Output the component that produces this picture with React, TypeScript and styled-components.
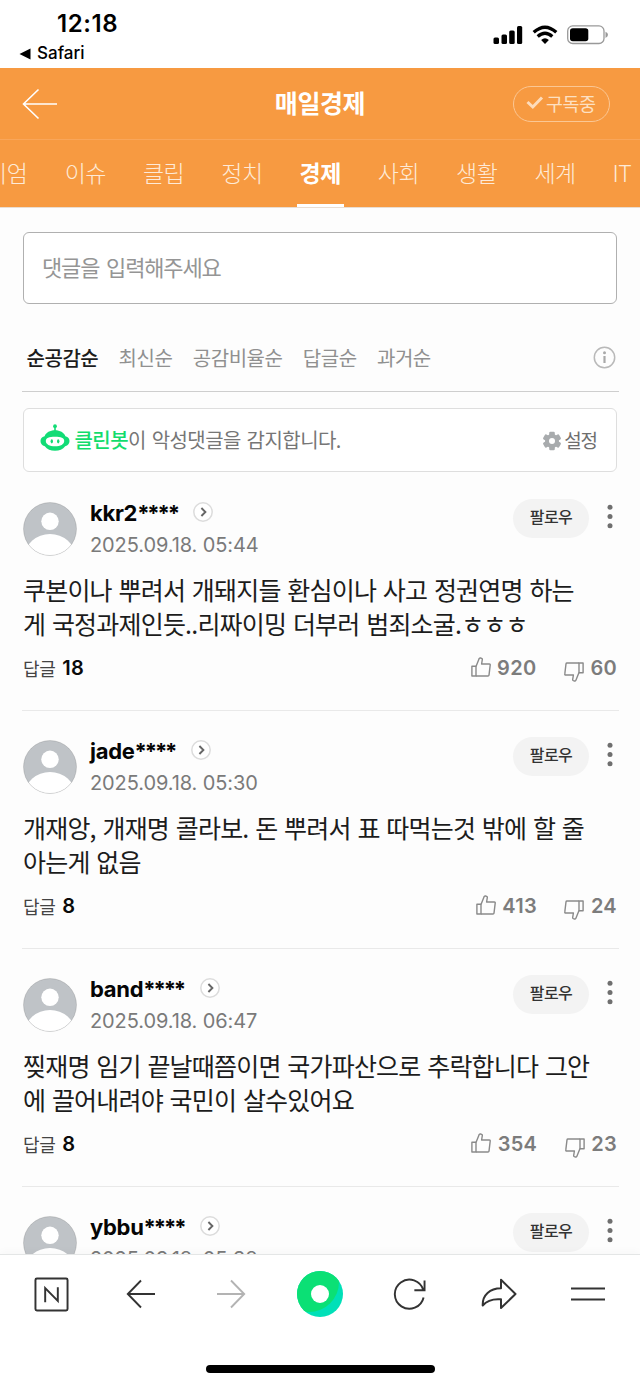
import React from "react";
import styled, { createGlobalStyle } from "styled-components";

const KR = `"Noto Sans CJK KR", "Noto Sans", sans-serif`;
const LATIN = `Inter, "Noto Sans CJK KR", sans-serif`;

const GlobalStyle = createGlobalStyle`
  *, *::before, *::after { box-sizing: border-box; }
  html, body { margin: 0; padding: 0; }
  body { background: #fff; font-family: ${KR}; }
  svg { display: block; flex: none; }
`;

const Screen = styled.div`
  width: 640px;
  height: 1385px;
  display: flex;
  flex-direction: column;
  overflow: hidden;
  background: #fff;
`;

const StatusBar = styled.div`
  height: 68px;
  flex: none;
  display: flex;
  justify-content: space-between;
  padding: 0 31px 0 19px;
  font-family: ${LATIN};
  color: #000;
`;

const StatusLeft = styled.div`
  display: flex;
  flex-direction: column;
`;

const Clock = styled.div`
  margin: 10px 0 0 38px;
  font-size: 24px;
  line-height: 28px;
  font-weight: 600;
  letter-spacing: 0.6px;
`;

const BackToApp = styled.div`
  display: flex;
  align-items: center;
  gap: 6px;
  margin-top: 5px;
  font-size: 17px;
  line-height: 21px;
  font-weight: 500;
`;

const StatusRight = styled.div`
  display: flex;
  align-items: flex-start;
  gap: 9px;
  padding-top: 24.5px;
`;

const Header = styled.header`
  height: 72px;
  flex: none;
  display: grid;
  grid-template-columns: 1fr auto 1fr;
  align-items: center;
  padding: 0 30px 0 22px;
  background: #f79a41;
  border-bottom: 1px solid #f9a65a;
`;

const Title = styled.h1`
  margin: 0 -8px 4px 0;
  font-size: 25px;
  line-height: 36px;
  font-weight: 700;
  letter-spacing: -0.4px;
  color: #fff;
`;

const SubscribeButton = styled.button`
  justify-self: end;
  width: 97px;
  height: 36px;
  display: flex;
  align-items: center;
  gap: 2px;
  padding: 0 0 2px 12px;
  border: 1.5px solid #fbc794;
  border-radius: 18px;
  background: none;
  font-family: ${KR};
  font-size: 18.5px;
  letter-spacing: -0.5px;
  color: #fde0c2;
  white-space: nowrap;
`;

const CategoryTabs = styled.nav`
  height: 68px;
  flex: none;
  display: flex;
  gap: 31.3px;
  margin-left: -58.5px;
  width: 698.5px;
  overflow: hidden;
  background: #f79a41;
  border-bottom: 1px solid #e9ddd2;
`;

const CategoryTab = styled.a<{ $active?: boolean; $width: number }>`
  flex: none;
  width: ${(p) => p.$width}px;
  display: flex;
  justify-content: center;
  font-size: 23px;
  line-height: 65px;
  letter-spacing: -0.5px;
  white-space: nowrap;
  font-weight: ${(p) => (p.$active ? 700 : 300)};
  color: ${(p) => (p.$active ? "#fff" : "#feead7")};
  box-shadow: ${(p) => (p.$active ? "inset 0 -3px 0 #fff" : "none")};
`;

const Content = styled.main`
  flex: 1;
  min-height: 0;
  overflow: hidden;
  display: flex;
  flex-direction: column;
  padding: 24px 23px 0;
  background: #fdfdfd;
`;

const CommentInput = styled.div`
  height: 72px;
  flex: none;
  padding-left: 18px;
  border: 1.5px solid #b0b0b0;
  border-radius: 6px;
  background: #fff;
  font-size: 22px;
  line-height: 67px;
  letter-spacing: -1.15px;
  word-spacing: 3px;
  color: #959595;
`;

const SortBar = styled.div`
  flex: none;
  height: 88px;
  display: flex;
  align-items: center;
  gap: 20.3px;
  margin: 0 -2px 0 -1px;
  padding: 20px 3px 0 4.5px;
  border-bottom: 1.5px solid #cecece;
`;

const SortOption = styled.span<{ $active?: boolean }>`
  font-size: 20px;
  line-height: 30px;
  letter-spacing: -0.45px;
  font-weight: ${(p) => (p.$active ? 500 : 400)};
  color: ${(p) => (p.$active ? "#1c1c1c" : "#909090")};
`;

const Spacer = styled.span`
  flex: 1;
`;

const CleanBotBox = styled.div`
  flex: none;
  height: 64px;
  margin-top: 16px;
  padding: 0 19px 0 16px;
  display: flex;
  align-items: center;
  border: 1.5px solid #dedede;
  border-radius: 6px;
  background: #fff;
`;

const BotSlot = styled.div`
  padding-bottom: 5px;
`;

const CleanBotText = styled.p`
  margin: 0 0 1px 4.5px;
  font-size: 20px;
  line-height: 30px;
  letter-spacing: -0.55px;
  word-spacing: 1.8px;
  color: #767676;
`;

const BotName = styled.strong`
  font-weight: 500;
  color: #12dc6c;
`;

const Settings = styled.span`
  margin: 0 0 1px 2.5px;
  font-size: 19px;
  line-height: 30px;
  letter-spacing: -1.1px;
  color: #6e6e6e;
`;

const GearSlot = styled.div`
  padding-top: 2px;
`;

const CommentList = styled.section`
  margin-top: 1px;
`;

const Comment = styled.article`
  height: 238px;
  margin: 0 -2px 0 -1px;
  padding: 26px 2px 0 1px;
  border-bottom: 1.5px solid #e9e9e9;
`;

const CommentHead = styled.div`
  display: flex;
  align-items: flex-start;
  height: 72.5px;
`;

const AvatarSlot = styled.div`
  padding-top: 3px;
`;

const Author = styled.div`
  margin-left: 13px;
  flex: 1;
`;

const NameRow = styled.div`
  display: flex;
  align-items: center;
  height: 27px;
`;

const Name = styled.span`
  padding-top: 2px;
  font-family: ${LATIN};
  font-size: 22px;
  line-height: 27px;
  font-weight: 700;
  letter-spacing: -0.3px;
  color: #050505;
`;

const Mask = styled.span`
  margin-right: 15.5px;
  letter-spacing: -2.1px;
`;

const ArrowSlot = styled.span`
  padding-bottom: 2px;
`;

const DateText = styled.time`
  display: block;
  margin-top: 6px;
  font-family: ${LATIN};
  font-size: 20px;
  line-height: 26px;
  letter-spacing: -0.1px;
  color: #7a7a7a;
`;

const FollowButton = styled.button`
  width: 76px;
  height: 38.5px;
  padding: 0 0 4px;
  border: 0;
  border-radius: 20px;
  background: #f3f3f3;
  font-family: ${KR};
  font-size: 16px;
  font-weight: 500;
  letter-spacing: -0.6px;
  color: #333;
`;

const MenuSlot = styled.div`
  width: 28px;
  padding: 5px 0 0 18px;
`;

const Body = styled.p`
  margin: 0;
  font-size: 25px;
  line-height: 34px;
  letter-spacing: -0.8px;
  word-spacing: 1.9px;
  white-space: pre;
  color: #1c1c1c;
`;

const CommentFoot = styled.div`
  display: flex;
  align-items: center;
  margin-top: 13.5px;
  height: 30px;
`;

const ReplyLabel = styled.span`
  margin: 0 6.5px 1px 0;
  font-size: 18px;
  letter-spacing: -0.2px;
  color: #444;
`;

const ReplyCount = styled.span`
  font-family: ${LATIN};
  font-size: 20px;
  font-weight: 600;
  letter-spacing: 0.4px;
  color: #0a0a0a;
`;

const Vote = styled.span`
  display: flex;
  align-items: center;
  gap: 6.5px;
  margin-left: 27.5px;
  font-family: ${LATIN};
  font-size: 20px;
  font-weight: 600;
  letter-spacing: 0.3px;
  color: #7c7c7c;
`;

const ThumbSlot = styled.span<{ $down?: boolean }>`
  padding-top: ${(p) => (p.$down ? 8 : 0)}px;
  padding-bottom: ${(p) => (p.$down ? 0 : 2)}px;
`;

const BottomBar = styled.footer`
  height: 131px;
  flex: none;
  display: flex;
  flex-direction: column;
  justify-content: space-between;
  align-items: center;
  padding-bottom: 12px;
  background: #fff;
  border-top: 1.5px solid #e4e6e6;
  box-shadow: 0 -3px 8px rgba(0, 0, 0, 0.025);
`;

const NavRow = styled.div`
  align-self: stretch;
  height: 78px;
  padding: 0 7px;
  display: grid;
  grid-template-columns: repeat(7, 1fr);
  place-items: center;
`;

const HomeIndicator = styled.div`
  width: 229px;
  height: 8px;
  border-radius: 4px;
  background: #000;
`;

const SignalIcon = () => (
  <svg width="30" height="20" viewBox="0 0 30 20">
    <rect x="0.5" y="12.5" width="5.5" height="6.5" rx="1.5" />
    <rect x="8.5" y="9.5" width="5.5" height="9.5" rx="1.5" />
    <rect x="16.2" y="5.5" width="5.5" height="13.5" rx="1.5" />
    <rect x="24" y="1" width="5.2" height="18" rx="1.5" />
  </svg>
);

const WifiIcon = () => (
  <svg width="26" height="20" viewBox="0 0 26 20" fill="none" stroke="#000" strokeWidth="3.3">
    <path d="M1.7 7.3Q13-3 24.3 7.3" />
    <path d="M5.7 11.5Q13 5 20.3 11.5" />
    <path d="M9.1 15Q13 11.6 16.9 15L13 19Z" fill="#000" stroke="none" />
  </svg>
);

const BatteryIcon = () => (
  <svg width="42" height="20" viewBox="0 0 42 20">
    <rect x="0.7" y="0.9" width="36.3" height="17.6" rx="5" fill="none" stroke="#999" strokeWidth="1.3" />
    <rect x="3" y="3.3" width="18.3" height="13" rx="2.8" />
    <path d="M38.5 6.7Q41 7.7 41 9.7T38.5 12.9Z" fill="#999" />
  </svg>
);

const InfoIcon = () => (
  <svg width="23" height="23" viewBox="0 0 23 23">
    <circle cx="11.5" cy="11.5" r="10.2" fill="none" stroke="#b9b9b9" strokeWidth="1.5" />
    <path d="M11.5 10V17" stroke="#a9a9a9" strokeWidth="2.2" />
    <circle cx="11.5" cy="6.8" r="1.5" fill="#a9a9a9" />
  </svg>
);

const BotIcon = () => (
  <svg width="30" height="28" viewBox="0 0 30 28">
    <g fill="#12dc76">
      <circle cx="15" cy="2.2" r="1.9" />
      <rect x="14.2" y="3" width="1.6" height="5" />
      <path d="M15 6.3C20 6.3 24 8.6 25.4 12.2C28.3 12.8 29.5 14.8 29.5 17C29.5 19.6 28 21.5 25.2 22.2C23 25.2 19.3 26.8 15 26.8S7 25.2 4.8 22.2C2 21.5 0.5 19.6 0.5 17C0.5 14.8 1.7 12.8 4.6 12.2C6 8.6 10 6.3 15 6.3Z" />
    </g>
    <path d="M15 12.7C21 12.7 24.2 13.7 24.2 17C24.2 20.3 20.5 22.3 15 22.3S5.8 20.3 5.8 17C5.8 13.7 9 12.7 15 12.7Z" fill="#fff" />
    <ellipse cx="11.8" cy="17.3" rx="1.2" ry="2.1" fill="#12dc76" />
    <ellipse cx="18.2" cy="17.3" rx="1.2" ry="2.1" fill="#12dc76" />
  </svg>
);

const GearIcon = () => (
  <svg width="20" height="20" viewBox="0 0 20 20">
    <g fill="#a8abad">
      {[0, 60, 120].map((deg) => (
        <rect key={deg} x="7.2" y="0.8" width="5.6" height="18.4" rx="1.2" transform={`rotate(${deg} 10 10)`} />
      ))}
      <circle cx="10" cy="10" r="7" />
    </g>
    <circle cx="10" cy="10" r="3" fill="#fff" />
  </svg>
);

const Avatar = ({ id }: { id: string }) => (
  <svg width="54" height="54" viewBox="0 0 54 54">
    <clipPath id={id}>
      <circle cx="27" cy="27" r="26.5" />
    </clipPath>
    <g clipPath={`url(#${id})`}>
      <rect width="54" height="54" fill="#bfc3c7" />
      <circle cx="27" cy="19.3" r="8.7" fill="#fff" />
      <ellipse cx="27" cy="54" rx="25" ry="22" fill="#fff" />
    </g>
    <circle cx="27" cy="27" r="26.5" fill="none" stroke="#000" strokeOpacity="0.12" />
  </svg>
);

const ProfileArrow = () => (
  <svg width="20" height="20" viewBox="0 0 20 20" fill="none">
    <circle cx="10" cy="10" r="9.2" fill="#fff" stroke="#dcdcdc" strokeWidth="1.5" />
    <path d="M8.4 6L12.4 10L8.4 14" stroke="#666" strokeWidth="1.9" />
  </svg>
);

const MoreIcon = () => (
  <svg width="6" height="26" viewBox="0 0 6 26" fill="#6f6f6f">
    <circle cx="3" cy="3.2" r="2.5" />
    <circle cx="3" cy="12.4" r="2.5" />
    <circle cx="3" cy="21.7" r="2.5" />
  </svg>
);

const ThumbIcon = ({ down }: { down?: boolean }) => (
  <svg width="20" height="20" viewBox="0 0 20 20" fill="none" stroke="#8a8a8a" strokeWidth="1.4" strokeLinejoin="round">
    <g transform={down ? "rotate(180 10 10)" : undefined}>
      <path d="M0.9 9.3H5V19H0.9Z" />
      <path d="M5 9.5L8.1 1.8C8.3 1 8.9 0.8 9.6 1L10.6 1.3C11.2 1.5 11.4 2 11.3 2.6L10.6 7H18.3C19 7 19.3 7.4 19.2 8.1L18 18.1C17.9 18.7 17.5 19 17 19H5" />
    </g>
  </svg>
);

interface CommentData {
  name: string;
  date: string;
  body?: string;
  replies?: number;
  up?: number;
  down?: number;
}

const comments: CommentData[] = [
  { name: "kkr2", date: "2025.09.18. 05:44", body: "쿠본이나 뿌려서 개돼지들 환심이나 사고 정권연명 하는\n게 국정과제인듯..리짜이밍 더부러 범죄소굴.ㅎㅎㅎ", replies: 18, up: 920, down: 60 },
  { name: "jade", date: "2025.09.18. 05:30", body: "개재앙, 개재명 콜라보. 돈 뿌려서 표 따먹는것 밖에 할 줄\n아는게 없음", replies: 8, up: 413, down: 24 },
  { name: "band", date: "2025.09.18. 06:47", body: "찢재명 임기 끝날때쯤이면 국가파산으로 추락합니다 그안\n에 끌어내려야 국민이 살수있어요", replies: 8, up: 354, down: 23 },
  { name: "ybbu", date: "2025.09.18. 05:38" },
];

const categories = [
  { label: "프리미엄", width: 89 },
  { label: "이슈", width: 47 },
  { label: "클립", width: 47 },
  { label: "정치", width: 47 },
  { label: "경제", width: 47, active: true },
  { label: "사회", width: 47 },
  { label: "생활", width: 47 },
  { label: "세계", width: 47 },
  { label: "IT", width: 24 },
];

const sorts = ["순공감순", "최신순", "공감비율순", "답글순", "과거순"];

export default function App() {
  return (
    <Screen>
      <GlobalStyle />
      <StatusBar>
        <StatusLeft>
          <Clock>12:18</Clock>
          <BackToApp>
            <svg width="12" height="12" viewBox="0 0 12 12">
              <path d="M0.5 6L11.5 0.5V11.5Z" />
            </svg>
            Safari
          </BackToApp>
        </StatusLeft>
        <StatusRight>
          <SignalIcon />
          <WifiIcon />
          <BatteryIcon />
        </StatusRight>
      </StatusBar>

      <Header>
        <svg width="36" height="32" viewBox="0 0 36 32" fill="none" stroke="#fff" strokeWidth="1.6">
          <path d="M16.5 1.5L1.5 16L16.5 30.5M1.5 16H35" />
        </svg>
        <Title>매일경제</Title>
        <SubscribeButton>
          <svg width="18" height="14" viewBox="0 0 18 14" fill="none" stroke="#fddcbc" strokeWidth="3">
            <path d="M1.5 6L6.8 11L16 1.5" />
          </svg>
          구독중
        </SubscribeButton>
      </Header>
      <CategoryTabs>
        {categories.map((c) => (
          <CategoryTab key={c.label} $width={c.width} $active={c.active}>
            {c.label}
          </CategoryTab>
        ))}
      </CategoryTabs>

      <Content>
        <CommentInput>댓글을 입력해주세요</CommentInput>
        <SortBar>
          {sorts.map((s, i) => (
            <SortOption key={s} $active={i === 0}>
              {s}
            </SortOption>
          ))}
          <Spacer />
          <InfoIcon />
        </SortBar>
        <CleanBotBox>
          <BotSlot>
            <BotIcon />
          </BotSlot>
          <CleanBotText>
            <BotName>클린봇</BotName>이 악성댓글을 감지합니다.
          </CleanBotText>
          <Spacer />
          <GearSlot>
            <GearIcon />
          </GearSlot>
          <Settings>설정</Settings>
        </CleanBotBox>
        <CommentList>
          {comments.map((c) => (
            <Comment key={c.name}>
              <CommentHead>
                <AvatarSlot>
                  <Avatar id={`avatar-${c.name}`} />
                </AvatarSlot>
                <Author>
                  <NameRow>
                    <Name>
                      {c.name}
                      <Mask>****</Mask>
                    </Name>
                    <ArrowSlot>
                      <ProfileArrow />
                    </ArrowSlot>
                  </NameRow>
                  <DateText>{c.date}</DateText>
                </Author>
                <FollowButton>팔로우</FollowButton>
                <MenuSlot>
                  <MoreIcon />
                </MenuSlot>
              </CommentHead>
              {c.body && (
                <>
                  <Body>{c.body}</Body>
                  <CommentFoot>
                    <ReplyLabel>답글</ReplyLabel>
                    <ReplyCount>{c.replies}</ReplyCount>
                    <Spacer />
                    <Vote>
                      <ThumbSlot>
                        <ThumbIcon />
                      </ThumbSlot>
                      {c.up}
                    </Vote>
                    <Vote>
                      <ThumbSlot $down>
                        <ThumbIcon down />
                      </ThumbSlot>
                      {c.down}
                    </Vote>
                  </CommentFoot>
                </>
              )}
            </Comment>
          ))}
        </CommentList>
      </Content>

      <BottomBar>
        <NavRow>
          <svg width="35" height="35" viewBox="0 0 36 36" fill="none" stroke="#333" strokeWidth="2">
            <rect x="1.5" y="1.5" width="33" height="33" rx="1.5" />
            <path d="M11.5 26V11.5L24.5 24.5V10.5" />
          </svg>
          <svg width="30" height="30" viewBox="0 0 30 30" fill="none" stroke="#333" strokeWidth="1.9">
            <path d="M15 1.500L1.8 15L15 28.5M1.8 15H29" />
          </svg>
          <svg width="30" height="30" viewBox="0 0 30 30" fill="none" stroke="#b3b3b3" strokeWidth="1.9">
            <path d="M15 1.5L28.2 15L15 28.5M28.2 15H1" />
          </svg>
          <svg width="46" height="46" viewBox="0 0 46 46">
            <clipPath id="greendot">
              <circle cx="23" cy="23" r="23" />
            </clipPath>
            <g clipPath="url(#greendot)">
              <rect width="46" height="46" fill="#00e0b8" />
              <circle cx="12" cy="11" r="30" fill="#0be075" />
            </g>
            <circle cx="23" cy="23" r="9" fill="#fff" />
          </svg>
          <svg width="33" height="33" viewBox="0 0 34 34" fill="none" stroke="#333" strokeWidth="2">
            <path d="M31.5 20A15 15 0 1 1 31.3 12.5M32.5 2.5V12.7H22" />
          </svg>
          <svg width="36" height="32" viewBox="0 0 36 32" fill="none" stroke="#333" strokeWidth="2" strokeLinejoin="round">
            <path d="M20 1.7L34.5 16L20 30V21.3C11 20.5 6 22.5 1.7 27.5C1.3 17 9 10.5 20 10.3Z" />
          </svg>
          <svg width="34" height="16" viewBox="0 0 34 16" stroke="#333" strokeWidth="2">
            <path d="M0 2.5H34M0 13.5H34" />
          </svg>
        </NavRow>
        <HomeIndicator />
      </BottomBar>
    </Screen>
  );
}
